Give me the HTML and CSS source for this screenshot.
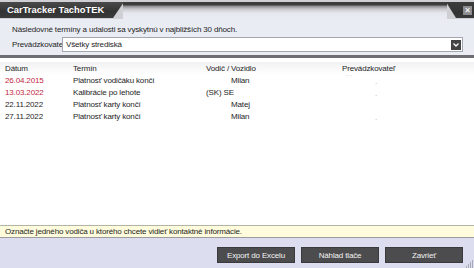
FILE: index.html
```html
<!DOCTYPE html>
<html lang="sk">
<head>
<meta charset="utf-8">
<title>CarTracker TachoTEK</title>
<link rel="stylesheet" href="styles.css">
</head>
<body>
<div class="window">
  <div class="titlebar">
    <div class="title-tab">CarTracker TachoTEK</div>
    <div class="title-strip"></div>
    <div class="close-tab"><span class="close-x">&#x2715;</span></div>
  </div>
  <div class="top-panel">
    <div class="info">Následovné termíny a udalosti sa vyskytnú v najbližších 30 dňoch.</div>
    <div class="filter">
      <span class="filter-label">Prevádzkovate</span>
      <div class="select">
        <span class="select-text">Všetky strediská</span>
        <span class="select-btn"><svg width="6" height="4" viewBox="0 0 6 4"><path d="M0.5 0.5 L3 3 L5.5 0.5" fill="none" stroke="#fff" stroke-width="1.3"/></svg></span>
      </div>
    </div>
  </div>
  <div class="list">
    <div class="row head">
      <span class="c-date">Dátum</span><span class="c-term">Termín</span><span class="c-drv">Vodič / Vozidlo</span><span class="c-op">Prevádzkovateľ</span>
    </div>
    <div class="row">
      <span class="c-date red">26.04.2015</span><span class="c-term">Platnosť vodičáku končí</span><span class="c-drv"><span class="name">Milan</span></span><span class="c-op"><span class="blur">' ' '</span><span class="dot">.</span></span>
    </div>
    <div class="row">
      <span class="c-date red">13.03.2022</span><span class="c-term">Kalibrácie po lehote</span><span class="c-drv">(SK) SE</span><span class="c-op"><span class="dot">.</span></span>
    </div>
    <div class="row">
      <span class="c-date">22.11.2022</span><span class="c-term">Platnosť karty končí</span><span class="c-drv"><span class="name">Matej</span></span><span class="c-op"></span>
    </div>
    <div class="row">
      <span class="c-date">27.11.2022</span><span class="c-term">Platnosť karty končí</span><span class="c-drv"><span class="name">Milan</span></span><span class="c-op"><span class="dot">.</span></span>
    </div>
  </div>
  <div class="status">Označte jedného vodiča u ktorého chcete vidieť kontaktné informácie.</div>
  <div class="footer">
    <button class="btn">Export do Excelu</button>
    <button class="btn">Náhlad tlače</button>
    <button class="btn">Zavrieť</button>
    <svg class="grip" width="9" height="9" viewBox="0 0 9 9">
      <g stroke="#a8aab8" stroke-width="1">
        <line x1="8.5" y1="1" x2="8.5" y2="9"/>
        <line x1="6.5" y1="3" x2="6.5" y2="9"/>
        <line x1="4.5" y1="5" x2="4.5" y2="9"/>
        <line x1="2.5" y1="7" x2="2.5" y2="9"/>
      </g>
    </svg>
  </div>
</div>
</body>
</html>
```
FILE: styles.css
```css
* { box-sizing: border-box; }
html, body { margin: 0; padding: 0; }
body {
  width: 474px;
  height: 268px;
  overflow: hidden;
  font-family: "Liberation Sans", Arial, sans-serif;
  font-size: 8px;
  letter-spacing: -0.15px;
  color: #1e1e1e;
  background: #eaecf4;
}
.window {
  width: 474px;
  height: 268px;
  display: flex;
  flex-direction: column;
}
.titlebar {
  height: 19px;
  display: flex;
  background: #d0d0d4;
  padding-top: 2px;
  flex: none;
}
.title-tab {
  width: 124px;
  height: 16px;
  background: linear-gradient(#4a4a4a, #333 60%, #3a3a3a);
  clip-path: polygon(0 0, 100% 0, calc(100% - 11px) 100%, 0 100%);
  color: #fff;
  font-weight: bold;
  font-size: 9.4px;
  letter-spacing: 0;
  padding-left: 7px;
  line-height: 16px;
  flex: none;
  margin-right: -1px;
}
.title-strip {
  flex: 1;
  height: 17px;
  background: linear-gradient(#3c3c3c 0, #3c3c3c 3px, #8a8a8e 4px, #c8c8cc 7px, #e6e7ee 11px, #eaecf4 17px);
}
.close-tab {
  width: 28px;
  height: 16px;
  flex: none;
  background: linear-gradient(#3c3c3c, #333 70%, #3a3a3a);
  clip-path: polygon(0 0, 100% 0, 100% 100%, 10px 100%);
  display: flex;
  justify-content: flex-end;
  align-items: center;
  padding-right: 2px;
  margin-left: -1px;
}
.close-x {
  width: 9px;
  height: 9px;
  background: #8c8c90;
  color: #fff;
  font-size: 8px;
  font-weight: bold;
  line-height: 9px;
  text-align: center;
  letter-spacing: 0;
  font-family: "DejaVu Sans", sans-serif;
}
.top-panel {
  height: 36px;
  padding: 6px 0 0 12px;
  display: flex;
  flex-direction: column;
  gap: 2px;
  flex: none;
  background: #eaecf4;
}
.info { line-height: 10px; height: 10px; }
.filter {
  display: flex;
  align-items: center;
  gap: 2px;
  height: 15px;
}
.filter-label { width: 48px; }
.select {
  width: 401px;
  height: 15px;
  background: #fff;
  border: 1px solid #a4a6b0;
  display: flex;
  align-items: center;
  justify-content: space-between;
  padding: 0 1px 0 3px;
}
.select-btn {
  width: 10px;
  height: 10px;
  background: #444;
  display: flex;
  align-items: center;
  justify-content: center;
}
.list {
  height: 170px;
  background: #fff;
  border-top: 3px solid #6e6e72;
  flex: none;
  padding-top: 4px;
}
.row {
  display: flex;
  height: 12px;
  line-height: 12px;
  white-space: nowrap;
}
.row.head {
  height: 13px;
  line-height: 13px;
  background: linear-gradient(#f2f2f4, #fff);
}
.c-date { width: 73px; padding-left: 5px; flex: none; }
.c-term { width: 133px; flex: none; }
.c-drv { width: 136px; flex: none; }
.c-op { flex: 1; position: relative; }
.red { color: #c0283e; }
.name { padding-left: 25px; }
.blur { color: #c8c8c8; font-size: 6px; position: absolute; left: 4px; top: -4px; }
.dot { color: #b0b0b0; position: absolute; left: 33px; top: 1px; }
.status {
  height: 13px;
  line-height: 11px;
  background: #fefcdc;
  border-top: 1px solid #b4b4a4;
  border-bottom: 1px solid #9c9ca0;
  padding-left: 5px;
  flex: none;
}
.footer {
  flex: 1;
  background: #dcdef0;
  display: flex;
  justify-content: flex-end;
  align-items: flex-start;
  padding: 9px 11px 0 0;
  gap: 6px;
  position: relative;
}
.btn {
  width: 78px;
  height: 16px;
  background: #4c4c4e;
  border: 1px solid #3a3a3c;
  color: #f2f2f2;
  font-family: "Liberation Sans", Arial, sans-serif;
  font-size: 8px;
  letter-spacing: -0.15px;
  padding: 0;
  margin: 0;
}
.grip { position: absolute; right: 1px; bottom: 0; }
```
